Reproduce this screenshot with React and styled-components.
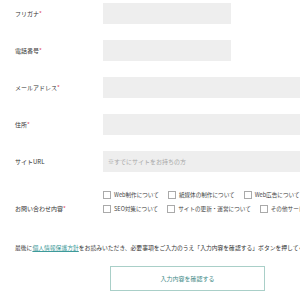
import React from 'react';
import styled, { createGlobalStyle } from 'styled-components';

const GlobalStyle = createGlobalStyle`
  body {
    margin: 0;
    background: #fff;
    overflow: hidden;
    font-family: 'Noto Sans CJK JP', 'Noto Sans', sans-serif;
    color: #333;
  }
`;

const fields = [
  { label: 'フリガナ', required: true, short: true },
  { label: '電話番号', required: true, short: true },
  { label: 'メールアドレス', required: true },
  { label: '住所', required: true },
  { label: 'サイトURL', placeholder: '※すでにサイトをお持ちの方' },
];

const topics = [
  ['Web制作について', '紙媒体の制作について', 'Web広告について'],
  ['SEO対策について', 'サイトの更新・運営について', 'その他サービスについて'],
];

const App = () => {
  return (
    <>
      <GlobalStyle />
      <Form>
        {fields.map((f) => (
          <Row key={f.label}>
            <Label>
              {f.label}
              {f.required && <Req>*</Req>}
            </Label>
            <Input $short={f.short}>
              {f.placeholder && <Placeholder>{f.placeholder}</Placeholder>}
            </Input>
          </Row>
        ))}

        <CheckRow>
          <Label $bottom>
            お問い合わせ内容<Req>*</Req>
          </Label>
          <CheckGroup>
            {topics.map((line, i) => (
              <CheckLine key={i}>
                {line.map((t) => (
                  <CheckItem key={t}>
                    <Box />
                    {t}
                  </CheckItem>
                ))}
              </CheckLine>
            ))}
          </CheckGroup>
        </CheckRow>

        <Note>
          最後に<a href="#">個人情報保護方針</a>をお読みいただき、必要事項をご入力のうえ「入力内容を確認する」ボタンを押してください。
        </Note>

        <SubmitButton type="button">入力内容を確認する</SubmitButton>
      </Form>
    </>
  );
};

export default App;

// Styling -----------------------------------

const Form = styled.div`
  width: 345px;
  padding: 3px 0 0 15px;
  display: flex;
  flex-direction: column;
`;

const Row = styled.div`
  display: grid;
  grid-template-columns: 88px 1fr;
  align-items: center;
  margin-bottom: 16px;
`;

const Label = styled.div`
  font-size: 6px;
  line-height: 14px;
  color: #333;
  white-space: nowrap;
  align-self: ${(p) => (p.$bottom ? 'end' : 'center')};
`;

const Req = styled.span`
  color: #e04a5a;
`;

const Input = styled.div`
  height: 21px;
  width: ${(p) => (p.$short ? '128px' : '100%')};
  background: #eeeeee;
  display: flex;
  align-items: center;
  padding-left: 5px;
  box-sizing: border-box;
`;

const Placeholder = styled.span`
  font-size: 6px;
  color: #a8a8a8;
  white-space: nowrap;
`;

const CheckRow = styled.div`
  display: grid;
  grid-template-columns: 88px 1fr;
`;

const CheckGroup = styled.div`
  display: flex;
  flex-direction: column;
`;

const CheckLine = styled.div`
  display: flex;
  gap: 9px;
  height: 14px;
  align-items: center;
  white-space: nowrap;
`;

const CheckItem = styled.label`
  display: flex;
  align-items: center;
  gap: 3px;
  font-size: 5.6px;
  color: #444;
`;

const Box = styled.span`
  width: 6px;
  height: 6px;
  border: 1px solid #aaa;
  background: #fff;
  flex-shrink: 0;
`;

const Note = styled.p`
  margin: 27px 0 0;
  font-size: 5.8px;
  line-height: 10px;
  color: #333;
  white-space: nowrap;

  a {
    color: #3d9a9a;
    text-decoration: underline;
  }
`;

const SubmitButton = styled.button`
  align-self: center;
  margin-top: 13px;
  width: 155px;
  height: 25px;
  border: 1px solid #a9cfc8;
  background: #fff;
  color: #3f8a88;
  font-family: 'Noto Sans CJK JP', sans-serif;
  font-size: 6px;
  cursor: pointer;
`;
